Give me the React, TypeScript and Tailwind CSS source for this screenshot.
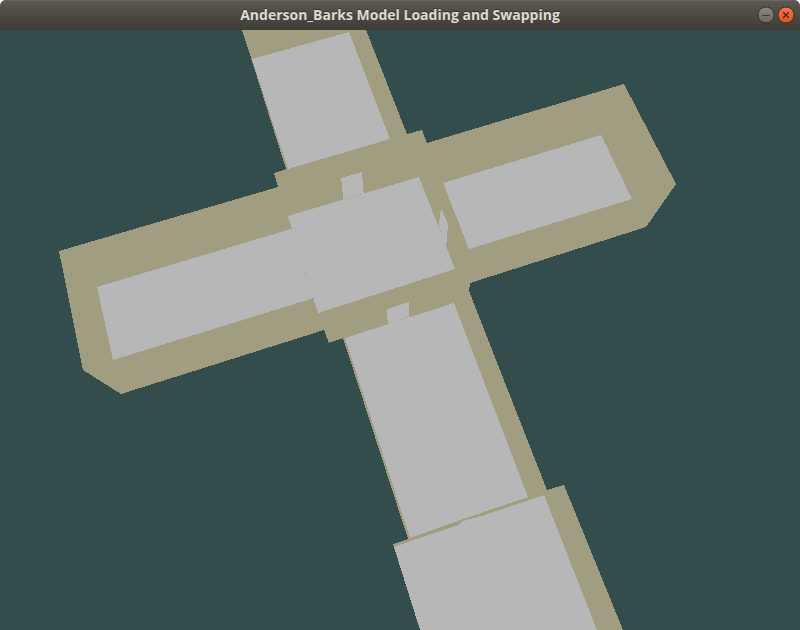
const OUTLINE =
  "242,30 366,30 407,134 422,130 427,143 624,84 676,184 646,227 470,283 469,291 547,490 564,485 623,630 420,630 393,544 408,539 343,338 329,343 324,330 121,394 83,370 59,251 278,187 274,173 286,169 251,58";

const FLOORS = [
  "252,59 349,32 390,139 288,169",
  "443,183 601,135 632,199 469,249",
  "288,216 419,177 455,269 318,313",
  "97,287 291,229 300,229 322,296 314,298 113,360",
  "345,338 454,303 528,497 484,512 458,521 410,538",
  "394,547 408,542 458,525 463,521 485,515 544,495 597,630 420,630",
  "341,178 362,172 364,198 344,204",
  "387,309 409,302 409,322 388,329",
  "441,208 448,224 446,250 438,232",
];

const SPECKS = [
  [347, 198], [350, 197], [354, 196], [357, 195], [360, 194],
  [294, 238], [295, 241], [296, 244], [305, 272], [306, 275], [312, 294],
  [440, 231], [442, 236],
  [397, 320], [400, 319], [403, 318], [406, 317],
  [483, 513], [483, 515], [485, 513],
];

function Scene() {
  return (
    <svg
      viewBox="0 30 800 600"
      preserveAspectRatio="xMidYMid slice"
      shapeRendering="crispEdges"
      role="img"
      aria-label="Floor plan model"
      className="block h-full w-full"
    >
      <polygon points={OUTLINE} fill="#a19d81" />
      {FLOORS.map((points) => (
        <polygon key={points} points={points} fill="#b7b7b7" />
      ))}
      {SPECKS.map(([x, y]) => (
        <rect key={`${x}-${y}`} x={x} y={y} width="1" height="1" fill="#a19d81" />
      ))}
    </svg>
  );
}

export default function App() {
  return (
    <div className="flex h-screen flex-col bg-white">
      <header className="grid h-[30px] shrink-0 grid-cols-[1fr_auto_1fr] items-center rounded-t-md bg-linear-to-b from-[#5b5951] to-[#3d3c37] px-[5px] shadow-[inset_0_1px_0_#696860]">
        <h1 className="col-start-2 font-['Open_Sans','Noto_Sans',sans-serif] text-sm leading-5 font-bold text-[#dfdbd2] [text-shadow:0_-1px_0_#33322e]">
          Anderson_Barks Model Loading and Swapping
        </h1>
        <div className="flex justify-end gap-0.5">
          <button aria-label="Minimize" className="size-[18px]">
            <svg viewBox="0 0 18 18" className="block">
              <circle cx="9" cy="9" r="8" fill="url(#minimizeFill)" stroke="#35342f" />
              <path d="M5 9.5h8" stroke="#3a3934" />
              <defs>
                <linearGradient id="minimizeFill" x2="0" y2="1">
                  <stop stopColor="#8b8a83" />
                  <stop offset="1" stopColor="#68675f" />
                </linearGradient>
              </defs>
            </svg>
          </button>
          <button aria-label="Close" className="size-[18px]">
            <svg viewBox="0 0 18 18" className="block">
              <circle cx="9" cy="9" r="8" fill="url(#closeFill)" stroke="#3b302a" />
              <path d="M6.2 6.2l5.6 5.6M11.8 6.2l-5.6 5.6" stroke="#472619" strokeWidth="1.4" />
              <defs>
                <linearGradient id="closeFill" x2="0" y2="1">
                  <stop stopColor="#f4794f" />
                  <stop offset="1" stopColor="#e54c19" />
                </linearGradient>
              </defs>
            </svg>
          </button>
        </div>
      </header>
      <main className="min-h-0 flex-1 bg-[#334d4d]">
        <Scene />
      </main>
    </div>
  );
}
